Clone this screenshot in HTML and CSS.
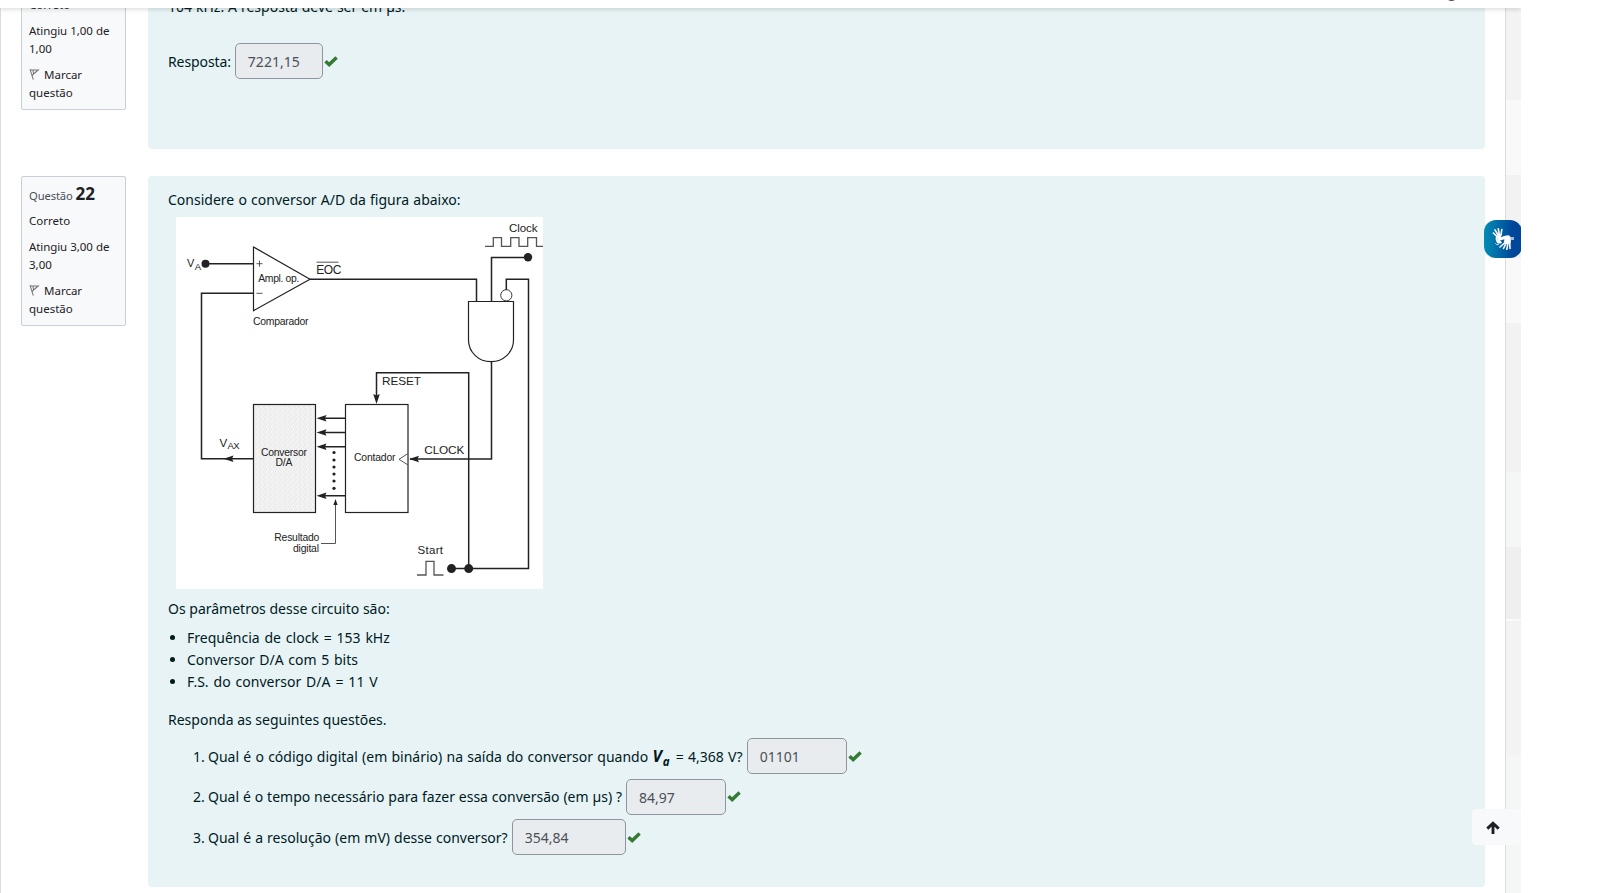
FILE: index.html
```html
<!DOCTYPE html>
<html lang="pt-BR">
<head>
<meta charset="utf-8">
<title>Questionário</title>
<link rel="stylesheet" href="styles.css">
</head>
<body>
<svg class="defs" width="0" height="0">
  <symbol id="check" viewBox="0 0 14 11"><path d="M1.5 5.2 5.2 8.6 12.6 1.6" fill="none" stroke="#357a32" stroke-width="3.4"/></symbol>
  <symbol id="flag" viewBox="0 0 12 13"><path d="M1 1.2 4.3 11.6M1.3 1.7 9.3 2 3.3 7M4 2.5 4.6 5.5" fill="none" stroke="#777" stroke-width="1.1"/></symbol>
</svg>
<div class="viewport">
  <header class="topbar"><span class="avatar"></span></header>
  <main class="page">
    <section class="question previous">
      <aside class="info">
        <p>Correto</p>
        <p><span class="grade">Atingiu 1,00 de</span><br>1,00</p>
        <p><svg class="flag"><use href="#flag"/></svg>Marcar<br>questão</p>
      </aside>
      <div class="panel">
        <p class="w-prev">104 kHz. A resposta deve ser em µs.</p>
        <div class="answer"><span class="w-resp">Resposta:</span><span class="field f88">7221,15</span><svg class="check"><use href="#check"/></svg></div>
      </div>
    </section>
    <section class="question">
      <aside class="info">
        <h3>Questão <b>22</b></h3>
        <p>Correto</p>
        <p><span class="grade">Atingiu 3,00 de</span><br>3,00</p>
        <p><svg class="flag"><use href="#flag"/></svg>Marcar<br>questão</p>
      </aside>
      <div class="panel">
        <p class="w-intro">Considere o conversor A/D da figura abaixo:</p>
        <svg class="figure" viewBox="176 217 367 372">
          <defs>
            <pattern id="grain" width="5" height="5" patternUnits="userSpaceOnUse"><rect width="5" height="5" fill="#f1f1f1"/><path d="M0 1h1M3 2h1M1 4h1M4 4h1" stroke="#e6e6e6"/><path d="M2 0h1M1 2h1M3 4h1" stroke="#fafafa"/></pattern>
            <path id="head" d="M0 0 10-3.3 8.5 0 10 3.3Z"/>
          </defs>
          <rect x="176" y="217" width="367" height="372" fill="#fff"/>
          <g class="wire">
            <path d="M205 263.7H253.5M310 279.2H476.5V301M528 257.5H491.5V301M506.3 290V279.2H528.5V568.6H452M253.5 293.3H201.5V458.7H253.5M491.5 362V459H410M376.5 400V372.8H468.7V568"/>
            <path d="M345.5 418.3H322M345.5 432.5H322M345.5 446.7H322M345.5 495.8H322"/>
          </g>
          <g class="shape">
            <path d="M253.5 247 310 279.2 253.5 310.7Z"/>
            <path d="M468.5 301.5H513.5V340C513.5 352 503.5 361.7 491 361.7S468.5 352 468.5 340Z"/>
            <circle cx="506.3" cy="295.3" r="5.6" stroke-width=".9"/>
            <rect x="253.5" y="404.5" width="62" height="108" fill="url(#grain)"/>
            <rect x="345.5" y="404.5" width="62.5" height="108"/>
          </g>
          <g class="thin">
            <path d="M485 246.3H493.3V237.7H501.5V246.3H510.7V237.7H519V246.3H527.7V237.7H536.5V246.3H543M417 575H426V561.3H434V575H443.5" stroke-width="1.3"/>
            <path d="M408 453.5 399 459.3 408 465M335.5 503V543.5H321M316.5 262.2H338.5M256.5 263.7H262.5M259.5 260.7V266.7M256.5 293.3H262.5"/>
          </g>
          <g class="solid">
            <circle cx="205.5" cy="263.7" r="4"/><circle cx="528" cy="257.3" r="4.2"/>
            <circle cx="451.5" cy="568.6" r="4.5"/><circle cx="468.7" cy="568.6" r="4.5"/>
            <circle cx="334" cy="452.5" r="1.6"/><circle cx="334" cy="460" r="1.6"/><circle cx="334" cy="467" r="1.6"/><circle cx="334" cy="474" r="1.6"/><circle cx="334" cy="481" r="1.6"/><circle cx="334" cy="488.3" r="1.6"/>
            <use href="#head" x="316.5" y="418.3"/><use href="#head" x="316.5" y="432.5"/><use href="#head" x="316.5" y="446.7"/><use href="#head" x="316.5" y="495.8"/>
            <use href="#head" x="223.5" y="458.7"/><use href="#head" x="409" y="459"/>
            <use href="#head" transform="translate(376.5 404) rotate(-90)"/>
            <path d="M335.5 499 337.6 505H333.4Z"/>
          </g>
          <g class="label">
            <text x="187" y="267.3" font-size="11">V</text><text x="194.8" y="270.3" font-size="9.5">A</text>
            <text x="258.3" y="281.7" textLength="41">Ampl. op.</text>
            <text x="316.3" y="273.6" font-size="12" textLength="25">EOC</text>
            <text x="253" y="324.6" textLength="55.5">Comparador</text>
            <text x="509" y="232.4" font-size="11.5" textLength="28.5">Clock</text>
            <text x="382" y="385.2" font-size="11.8" textLength="39">RESET</text>
            <text x="219.5" y="447" font-size="11.5">V</text><text x="227.6" y="449.4" font-size="9.5" textLength="12">AX</text>
            <text x="261" y="455.5" textLength="46">Conversor</text>
            <text x="275.5" y="466.3" textLength="17">D/A</text>
            <text x="354" y="461.3" textLength="41.5">Contador</text>
            <text x="424.3" y="454.2" font-size="11.8" textLength="40">CLOCK</text>
            <text x="274.3" y="540.8" textLength="45">Resultado</text>
            <text x="293" y="551.8" textLength="26">digital</text>
            <text x="417.5" y="553.7" font-size="11.5" textLength="25.5">Start</text>
          </g>
        </svg>
        <p>Os parâmetros desse circuito são:</p>
        <ul>
          <li class="w-li1">Frequência de clock = 153 kHz</li>
          <li class="w-li2">Conversor D/A com 5 bits</li>
          <li class="w-li3">F.S. do conversor D/A = 11 V</li>
        </ul>
        <p class="w-answer">Responda as seguintes questões.</p>
        <div class="steps">
          <div class="answer"><span class="num">1.</span><span class="w-q1">Qual é o código digital (em binário) na saída do conversor quando <b class="var">V<sub>a</sub></b> = 4,368 V?</span><span class="field f100">01101</span><svg class="check"><use href="#check"/></svg></div>
          <div class="answer"><span class="num">2.</span><span class="w-q2">Qual é o tempo necessário para fazer essa conversão (em µs) ?</span><span class="field f100">84,97</span><svg class="check"><use href="#check"/></svg></div>
          <div class="answer"><span class="num">3.</span><span class="w-q3">Qual é a resolução (em mV) desse conversor?</span><span class="field f114">354,84</span><svg class="check"><use href="#check"/></svg></div>
        </div>
      </div>
    </section>
  </main>
  <div class="backdrop"></div>
  <div class="libras">
    <svg viewBox="0 0 38 38"><g fill="none" stroke="#fff" stroke-linecap="round">
      <path d="M13.5 17 9.3 13M14 15 11 9.8M15.3 14.5 14.3 8.8M17 15 17.8 9.5" stroke-width="1.6"/>
      <path d="M12.8 17Q12 20 14.3 22.5H16.5M20 17.2 16.7 19" stroke-width="2"/>
      <path d="M20.5 23 16 27M22.2 23 19.5 28.5M24 23 22.8 29.3M25.7 22.5 26 28.5" stroke-width="1.6"/>
      <path d="M11.5 23.5Q12.5 25.5 14.5 24.7" stroke-width=".8"/></g>
      <path d="M13 15.5 17.8 13.6 17 17.5 22 15.6 25 15.2 27 17.5 26.8 22.5 24.5 24 20 23.5 20.3 19.3 16 20.5 18 22.5 14.3 23Z" fill="#fff"/><path d="M26.5 17H30V20H26.5Z" fill="#9dbbd8"/>
    </svg>
  </div>
  <div class="to-top"><svg viewBox="0 0 14 14"><path d="M7 13V2M1.3 7.6 7 2.2 12.7 7.6" fill="none" stroke="#1d2125" stroke-width="2.9"/></svg></div>
</div>
</body>
</html>
```
FILE: styles.css
```css
* { box-sizing: border-box; }
body { margin: 0; background: #fff; color: #1d2125; font: 14px/22px "Noto Sans", "Open Sans", sans-serif; }
p, h3, ul { margin: 0; padding: 0; }
.defs { position: absolute; }
.viewport { position: relative; display: flex; width: 1521px; height: 893px; overflow: hidden; }
.topbar { position: absolute; z-index: 2; top: 0; left: 0; width: 1521px; height: 8px; background: #fff; box-shadow: 0 2px 4px rgba(0,0,0,.12); }
.avatar { position: absolute; left: 1446px; top: -9px; width: 11px; height: 10px; border-radius: 50%; background: #604050; }
.page { width: 1506px; height: 893px; border: solid #dadcde; border-width: 0 1px; padding: 0 20px; display: flex; flex-direction: column; gap: 27px; background: #fff; }
.question { display: flex; gap: 22px; align-items: flex-start; height: 711px; }
.question.previous { height: 149px; }
.question, .info, .panel { flex-shrink: 0; }
.info { width: 105px; border: 1px solid #cad0d7; border-radius: 2px; background: #f8f9fa; padding: 7px; font-size: 11.5px; line-height: 18px; display: flex; flex-direction: column; gap: 8px; }
.previous .info { margin-top: -12px; }
.info h3 { height: 20px; font-size: 11.2px; font-weight: 400; line-height: 20px; color: #495057; letter-spacing: -.1px; }
.info h3 b { font-size: 17px; color: #1d2125; line-height: 20px; }
.grade { white-space: nowrap; word-spacing: .4px; letter-spacing: -.1px; }
.flag { width: 12px; height: 13px; margin-right: 3px; vertical-align: -2px; }
.panel { width: 1337px; height: 100%; padding: 13px 20px 0; border-radius: 4px; background: #e7f3f5; color: #001a1e; white-space: nowrap; }
.previous .panel { padding-top: 0; border-radius: 0 0 4px 4px; }
.previous .panel p { margin-top: -4px; }
.previous .answer { margin-top: 25px; }
.w-prev { word-spacing: .3px; }
.w-resp { letter-spacing: -.1px; }
.w-intro { word-spacing: .55px; }
.w-li1 { word-spacing: 1.2px; }
.w-li2 { word-spacing: 1px; }
.w-li3 { word-spacing: 1.3px; }
.w-answer { word-spacing: 0; }
.w-q1 { word-spacing: .6px; }
.w-q2 { word-spacing: .25px; }
.w-q3 { word-spacing: .45px; }
.w-resp, .w-q1, .w-q2, .w-q3, .num { padding-top: 1px; }
.figure { display: block; width: 367px; height: 372px; margin: 6px 0 9px 8px; }
.wire { fill: none; stroke: #222; stroke-width: 1.5; }
.shape { fill: #fff; stroke: #222; stroke-width: 1.2; }
.thin { fill: none; stroke: #555; stroke-width: 1; }
.solid { fill: #222; }
.label { font-family: "Liberation Sans", Arial, sans-serif; font-size: 10.4px; fill: #222; }
.panel ul { margin: 7px 0 16px; padding-left: 19px; }
.steps { display: flex; flex-direction: column; gap: 4.5px; margin: 7px 0 0 25px; }
.answer { display: flex; align-items: center; height: 36px; }
.num { width: 15px; }
.field { height: 36px; margin-left: 4px; padding: 0 12px; border: 1px solid #8f959e; border-radius: 5px; background: #e9ecef; color: #495057; line-height: 35px; }
.f88 { width: 88px; }
.f100 { width: 100px; }
.f114 { width: 114px; }
.check { width: 14px; height: 11px; margin-left: 1px; }
.var { display: inline-block; width: 20px; margin-right: -1px; font-style: italic; font-size: 16px; line-height: 20px; }
.var sub { margin-left: 1px; font-size: 11.5px; line-height: 0; vertical-align: -4px; }
.backdrop { width: 15px; height: 893px; background: linear-gradient(#f3f3f3 0 100px, #f9f9f9 100px 175px, #f2f2f2 175px 258px, #f9f9f9 258px 323px, #f2f2f2 323px 472px, #f5f6f6 472px 547px, #efefef 547px 619px, #fafafa 619px 621px, #f3f3f3 621px 755px, #f5f6f6 755px); }
.libras { position: absolute; left: 1484px; top: 220px; width: 38px; height: 38px; border-radius: 12px; background: linear-gradient(90deg, #008db4, #00479a 75%); }
.libras svg { display: block; width: 38px; height: 38px; }
.to-top { position: absolute; left: 1472px; top: 809px; width: 49px; height: 36px; border-radius: 4px 0 0 4px; background: #f8f9fa; padding: 12px 0 0 14px; }
.to-top svg { display: block; width: 14px; height: 14px; }
```
